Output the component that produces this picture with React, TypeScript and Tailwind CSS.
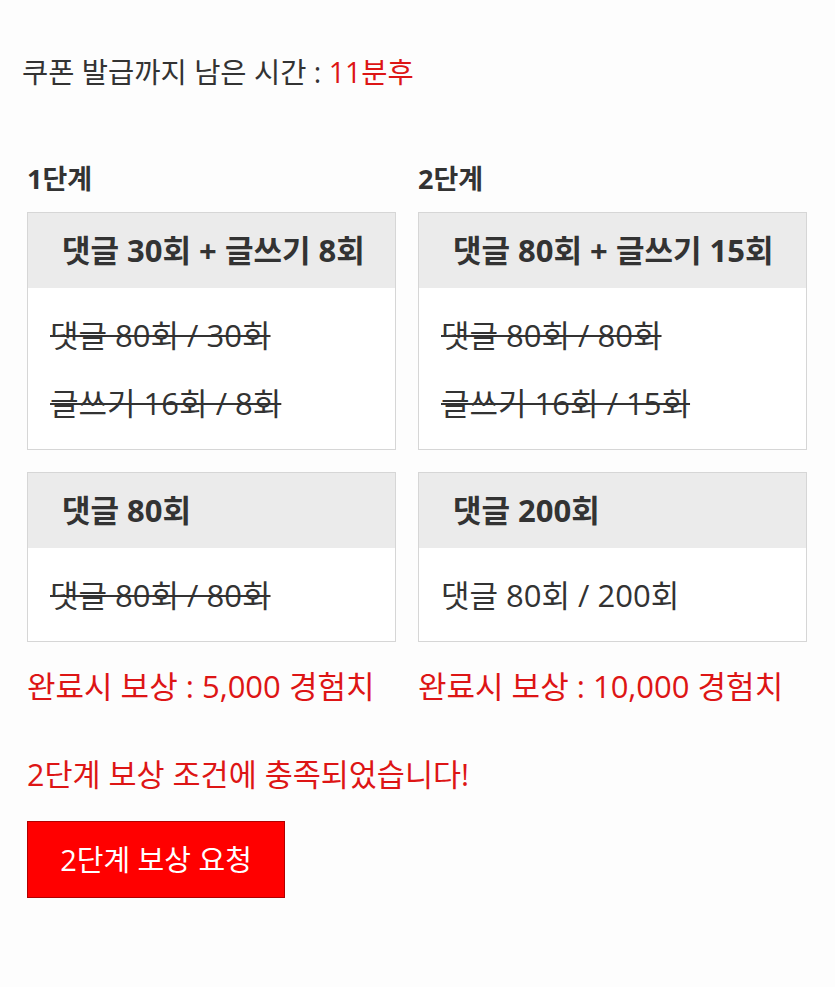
import React from 'react';

type Mission = { title: string; lines: { text: string; done: boolean }[] };

const stages: { label: string; missions: Mission[]; reward: string; width: string }[] = [
  {
    label: '1단계',
    width: 'w-[369px]',
    reward: '완료시 보상 : 5,000 경험치',
    missions: [
      {
        title: '댓글 30회 + 글쓰기 8회',
        lines: [
          { text: '댓글 80회 / 30회', done: true },
          { text: '글쓰기 16회 / 8회', done: true },
        ],
      },
      { title: '댓글 80회', lines: [{ text: '댓글 80회 / 80회', done: true }] },
    ],
  },
  {
    label: '2단계',
    width: 'w-[389px]',
    reward: '완료시 보상 : 10,000 경험치',
    missions: [
      {
        title: '댓글 80회 + 글쓰기 15회',
        lines: [
          { text: '댓글 80회 / 80회', done: true },
          { text: '글쓰기 16회 / 15회', done: true },
        ],
      },
      { title: '댓글 200회', lines: [{ text: '댓글 80회 / 200회', done: false }] },
    ],
  },
];

function MissionCard({ mission }: { mission: Mission }) {
  return (
    <div className="border border-[#d6d6d6] bg-white">
      <div className="h-[75px] bg-[#ebebeb] flex items-center pl-[34px] text-[31px] font-bold text-[#333]">
        {mission.title}
      </div>
      <div className="pl-[22px] pt-[13px] pb-[12px]">
        {mission.lines.map((l) => (
          <div
            key={l.text}
            className={`h-[68px] flex items-center text-[31px] text-[#333] ${l.done ? 'line-through decoration-[#333] decoration-2' : ''}`}
          >
            {l.text}
          </div>
        ))}
      </div>
    </div>
  );
}

export default function App() {
  return (
    <div
      className="min-h-[987px] bg-[#fdfdfd] pt-[52px] pl-[22px]"
      style={{ fontFamily: '"Open Sans", "Noto Sans CJK KR", sans-serif' }}
    >
      <p className="text-[28.5px] text-[#333] leading-[40px]">
        쿠폰 발급까지 남은 시간 : <span className="text-[#dd1515]">11분후</span>
      </p>

      <div className="mt-[72px] pl-[5px] flex gap-[22px]">
        {stages.map((s) => (
          <div key={s.label} className={s.width}>
            <h3 className="text-[27px] font-bold text-[#333] leading-[30px] mb-[18px]">{s.label}</h3>
            <div className="flex flex-col gap-[22px]">
              {s.missions.map((m) => (
                <MissionCard key={m.title} mission={m} />
              ))}
            </div>
            <p className="mt-[24px] text-[31px] text-[#dd1515] leading-[40px] whitespace-nowrap">{s.reward}</p>
          </div>
        ))}
      </div>

      <div className="pl-[5px]">
        <p className="mt-[48px] text-[30.5px] text-[#dd1515] leading-[40px]">2단계 보상 조건에 충족되었습니다!</p>
        <button className="mt-[27px] w-[258px] h-[77px] bg-[#ff0000] border border-[#b00000] text-white text-[29px]">
          2단계 보상 요청
        </button>
      </div>
    </div>
  );
}
